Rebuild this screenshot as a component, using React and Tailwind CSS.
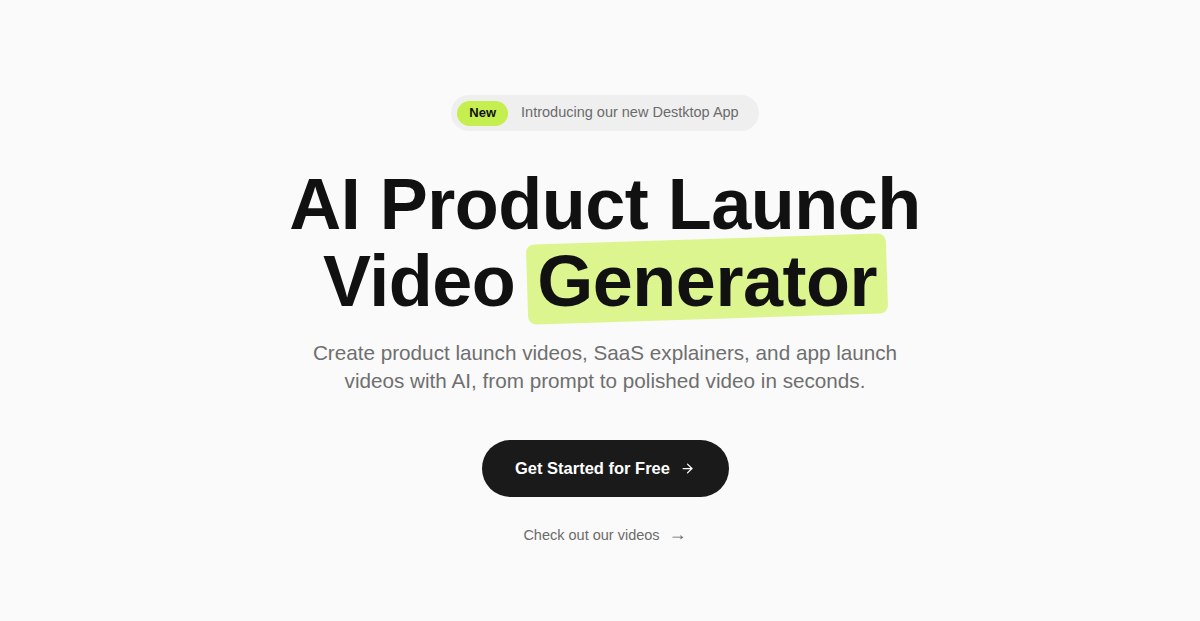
import { ArrowRight } from 'lucide-react';

export default function App() {
    return (
        <div className="min-h-screen w-full bg-[#fafafa] font-['Liberation_Sans',Arial,sans-serif] text-[#111111]">
            <section className="flex flex-col items-center pt-[95px] pl-[10px]">
                {/* Announcement pill */}
                <div className="flex items-center h-[36px] rounded-full bg-[#efefef] pl-[6px] pr-[20px] gap-[13px]">
                    <span className="flex items-center h-[25px] px-[12px] rounded-full bg-[#c5ee4f] text-[13px] font-bold text-[#111]">
                        New
                    </span>
                    <span className="text-[14.5px] text-[#6b6b6b]">Introducing our new Destktop App</span>
                </div>

                {/* Heading */}
                <h1 className="mt-[35px] text-center text-[72px] font-bold leading-[77px] tracking-[-0.5px]">
                    <span className="block">AI Product Launch</span>
                    <span className="block">
                        Video
                        <span className="relative inline-block ml-[12px] pl-[10px] pr-[10px]">
                            <span className="absolute inset-x-0 top-[-4px] bottom-[1px] rounded-[8px] bg-[#dcf58f] -rotate-[1.8deg]"></span>
                            <span className="relative">Generator</span>
                        </span>
                    </span>
                </h1>

                {/* Subtitle */}
                <p className="mt-[19px] text-center text-[20.7px] leading-[28px] text-[#6f6f6f]">
                    Create product launch videos, SaaS explainers, and app launch
                    <br />
                    videos with AI, from prompt to polished video in seconds.
                </p>

                {/* CTA */}
                <button className="mt-[45px] flex items-center justify-center gap-[10px] h-[57px] w-[247px] rounded-full bg-[#1a1a1a] text-white text-[16.5px] font-bold">
                    Get Started for Free
                    <ArrowRight size={15} strokeWidth={2} />
                </button>

                <a href="#" className="mt-[28px] flex items-center gap-[9px] text-[14.5px] text-[#6b6b6b]">
                    Check out our videos <span className="text-[18px] leading-none -translate-y-[2px]">→</span>
                </a>
            </section>
        </div>
    );
}
